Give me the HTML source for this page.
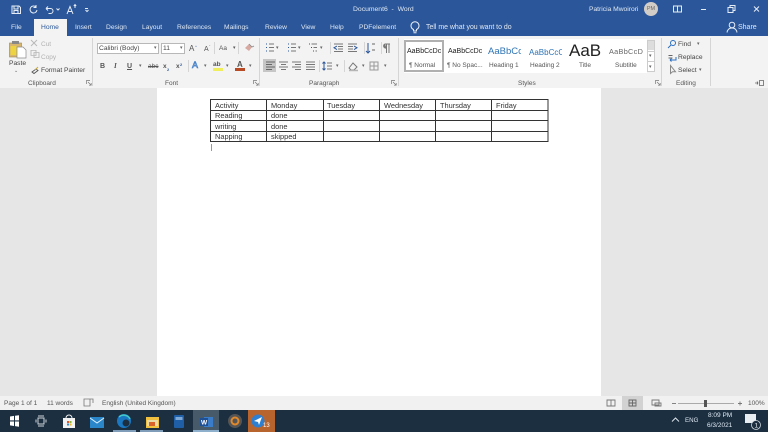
<!DOCTYPE html>
<html><head><meta charset="utf-8"><style>
html,body{margin:0;padding:0;width:768px;height:432px;overflow:hidden;background:#e6e6e6;font-family:"Liberation Sans",sans-serif}
body{filter:blur(.3px)}
div,span{position:absolute;white-space:nowrap}
.w{color:#dfe7f3;font-size:6.7px;line-height:9px}
.t{color:#444;font-size:6.7px;line-height:9px}
.g{color:#555;font-size:6.5px;line-height:9px}
.a{color:#666;font-size:5px;line-height:9px}
.sep{width:1px;background:#d5d5d5}
.btn{color:#555;font-size:7px;font-weight:bold;line-height:9px}
.cell{font-size:7.4px;line-height:10px;color:#333}
svg{position:absolute}
</style></head><body>
<div style="left:0;top:0;width:768px;height:36px;background:#2b579a"></div>
<div style="left:0;top:36px;width:768px;height:52px;background:#f3f3f3"></div>
<div style="left:0;top:88px;width:768px;height:308px;background:#e6e6e6"></div>
<div style="left:157px;top:88px;width:444px;height:308px;background:#fff"></div>
<div style="left:0;top:396px;width:768px;height:14px;background:#f1f1f1"></div>
<div style="left:0;top:410px;width:768px;height:22px;background:#1b2f40"></div>

<!-- QAT -->
<svg style="left:0;top:0" width="100" height="18" fill="none" stroke="#e6ecf5" stroke-width="1">
<path d="M12 6h7l1.500 1.500v6h-8.500z M14 6v3h4v-3 M14 13.500v-3h4v3"/>
<path d="M36 7a3.500 3.500 0 1 0 1 3 M36 5v2.500h-2.500"/>
<path d="M46 8.500h4.500a2.500 2.500 0 0 1 0 5h-2 M46 8.500l2-2 M46 8.500l2 2"/>
<path d="M56.500 8.500l1.500 1.500 1.500-1.500"/>
<path d="M67 14l3-7.500 3 7.500 M68.200 11.500h3.600 M75 8V5 M73.800 6l1.200-1.500 1.200 1.500"/>
<path d="M85 8.500h3 M85.500 10l1.500 1.500 1.500-1.500"/>
</svg>
<div class="w" style="left:353px;top:5px;font-size:6.800px">Document6 &nbsp;- &nbsp;Word</div>
<div class="w" style="left:589px;top:5px">Patricia Mwoirori</div>
<div style="left:644px;top:2px;width:14px;height:14px;border-radius:7px;background:#d3cdc8;color:#666;font-size:5.500px;line-height:14px;text-align:center">PM</div>
<svg style="left:670px;top:0" width="98" height="18" fill="none" stroke="#e6ecf5" stroke-width="1">
<path d="M3.500 6h8v6h-8z M7.500 6v6"/>
<path d="M31 9.500h5"/>
<path d="M58 7.500h5v5h-5z M60 7.500v-2h5v5h-2"/>
<path d="M84 6.500l5 5 M89 6.500l-5 5"/>
</svg>

<!-- tabs -->
<div class="w" style="left:11px;top:23px">File</div>
<div style="left:34px;top:19px;width:33px;height:17px;background:#f3f3f3"></div>
<div style="left:41px;top:23px;font-size:6.700px;line-height:9px;color:#2b579a">Home</div>
<div class="w" style="left:75px;top:23px">Insert</div>
<div class="w" style="left:106px;top:23px">Design</div>
<div class="w" style="left:142px;top:23px">Layout</div>
<div class="w" style="left:177px;top:23px">References</div>
<div class="w" style="left:224px;top:23px">Mailings</div>
<div class="w" style="left:265px;top:23px">Review</div>
<div class="w" style="left:301px;top:23px">View</div>
<div class="w" style="left:330px;top:23px">Help</div>
<div class="w" style="left:359px;top:23px">PDFelement</div>
<svg style="left:408px;top:20px" width="14" height="15" fill="none" stroke="#e6ecf5" stroke-width="1"><path d="M5.500 11v-1.500a4 4 0 1 1 3 0V11z M5.500 12.800h3"/></svg>
<div class="w" style="left:426px;top:23px;font-size:6.950px">Tell me what you want to do</div>
<svg style="left:725px;top:20px" width="14" height="15" fill="none" stroke="#e6ecf5" stroke-width="1"><circle cx="7" cy="5" r="2.800"/><path d="M2 12.500c.5-3 2.500-4.500 5-4.500s4.500 1.500 5 4.500"/></svg>
<div class="w" style="left:738px;top:23px;font-size:7px">Share</div>

<!-- clipboard -->
<svg style="left:8px;top:40px" width="20" height="20"><rect x="1.500" y="3" width="12" height="14" fill="#d9b66d" stroke="#9c8350" stroke-width=".6"/><rect x="4" y="1" width="7" height="3" fill="#888"/><rect x="2.500" y="6" width="6" height="9" fill="#ecd33f"/><path d="M9 7h6l3 3v8h-9z" fill="#fff" stroke="#8a8a8a" stroke-width=".7"/></svg>
<div class="t" style="left:9px;top:59px">Paste</div>
<div class="a" style="left:14px;top:67px">⌄</div>
<svg style="left:29px;top:39px" width="12" height="38" fill="none" stroke="#b8b8b8" stroke-width=".9">
<path d="M2 1l6 6 M8 1l-6 6 M2 8.500h.1 M8 8.500h.1"/>
<path d="M2 14h5v6h-5z M5 16.500h5v6h-5z" transform="translate(0 -.5) scale(1 .85)"/>
<path d="M3 33l4-3 2 1.500-4 3z" stroke="#555"/><path d="M6 31l3-3" stroke="#c9a62c"/>
</svg>
<div style="left:41px;top:40px;font-size:6.500px;line-height:9px;color:#b2b2b2">Cut</div>
<div style="left:41px;top:53px;font-size:6.500px;line-height:9px;color:#b2b2b2">Copy</div>
<div class="t" style="left:41px;top:66px">Format Painter</div>
<div class="g" style="left:28px;top:79px">Clipboard</div>
<div class="sep" style="left:92px;top:38px;height:48px"></div>

<!-- font -->
<div style="left:97px;top:43px;width:62px;height:11px;background:#fff;border:1px solid #b8b8b8;box-sizing:border-box"></div>
<div class="t" style="left:99px;top:44px">Calibri (Body)</div>
<div class="a" style="left:154px;top:44px">▾</div>
<div style="left:161px;top:43px;width:24px;height:11px;background:#fff;border:1px solid #b8b8b8;box-sizing:border-box"></div>
<div class="t" style="left:163px;top:44px">11</div>
<div class="a" style="left:180px;top:44px">▾</div>
<div class="btn" style="left:189px;top:44px;font-size:8px;font-weight:normal">A<span style="left:6px;top:-2px;font-size:4px;color:#2b579a">^</span></div>
<div class="btn" style="left:204px;top:45px;font-size:7px;font-weight:normal">A<span style="left:5px;top:-3px;font-size:4px;color:#2b579a">ˇ</span></div>
<div class="sep" style="left:214px;top:42px;height:12px"></div>
<div class="g" style="left:219px;top:44px">Aa <span style="left:14px;top:0;font-size:5px">▾</span></div>
<div class="sep" style="left:238px;top:42px;height:12px"></div>
<svg style="left:243px;top:42px" width="12" height="12"><path d="M2 6l4-4 3 3-3 4z" fill="#d8a9a0"/><path d="M6 2l3 3 2-1" stroke="#888" fill="none" stroke-width=".8"/></svg>
<div class="btn" style="left:100px;top:62px">B</div>
<div class="btn" style="left:114px;top:62px;font-style:italic;font-family:'Liberation Serif',serif">I</div>
<div class="btn" style="left:127px;top:62px;text-decoration:underline">U</div>
<div class="a" style="left:139px;top:62px">▾</div>
<div class="g" style="left:148px;top:62px;text-decoration:line-through">abc</div>
<div class="g" style="left:163px;top:62px;font-weight:bold">x<span style="left:4px;top:3px;font-size:4px;color:#2b579a">2</span></div>
<div class="g" style="left:176px;top:62px;font-weight:bold">x<span style="left:4px;top:-2px;font-size:4px;color:#2b579a">2</span></div>
<div class="sep" style="left:188px;top:60px;height:12px"></div>
<div style="left:192px;top:60px;font-size:9px;line-height:11px;color:#fff;-webkit-text-stroke:.6px #2b6fc0">A</div>
<div class="a" style="left:204px;top:62px">▾</div>
<div class="g" style="left:213px;top:60px;font-weight:bold">ab</div>
<div style="left:213px;top:68px;width:10px;height:3px;background:#f0ee5a"></div>
<div class="a" style="left:226px;top:62px">▾</div>
<div class="btn" style="left:237px;top:60px;font-size:8px;line-height:9px">A</div>
<div style="left:235px;top:68px;width:10px;height:2.500px;background:#b84a26"></div>
<div class="a" style="left:249px;top:62px">▾</div>
<div class="g" style="left:165px;top:79px">Font</div>
<div class="sep" style="left:259px;top:38px;height:48px"></div>

<!-- paragraph -->
<svg style="left:264px;top:41px" width="134" height="14" fill="none" stroke="#777" stroke-width="1">
<path d="M2 3h1 M2 6.500h1 M2 10h1" stroke="#2b579a"/><path d="M5 3h5 M5 6.500h5 M5 10h5"/>
<path d="M24 3h1 M24 6.500h1 M24 10h1" stroke="#2b579a"/><path d="M27 3h5 M27 6.500h5 M27 10h5"/>
<path d="M45 3h1 M47 6.500h1 M49 10h1" stroke="#2b579a"/><path d="M47.500 3h5.500 M49.500 6.500h3.500 M51.500 10h1.500"/>
<path d="M70 3h9 M74 5.500h5 M74 8h5 M70 10.500h9"/><path d="M73 5l-3 1.800 3 1.800" stroke="#2b579a"/>
<path d="M84 3h9 M84 5.500h5 M84 8h5 M84 10.500h9"/><path d="M90 5l3 1.800-3 1.800" stroke="#2b579a"/>
<path d="M104 2v10 M102 10l2 2 2-2" stroke="#2b579a"/><path d="M108 3h3 M108 9h3" stroke="#666"/>
<path d="M121 3h5 M122.500 3v9 M125 3v9"/><path d="M121 3a2 2 0 0 0 1.500 4" fill="#777"/>
</svg>
<div class="a" style="left:276px;top:44px">▾</div>
<div class="a" style="left:298px;top:44px">▾</div>
<div class="a" style="left:320px;top:44px">▾</div>
<div class="sep" style="left:330px;top:42px;height:12px"></div>
<div class="sep" style="left:364px;top:42px;height:12px"></div>
<div class="sep" style="left:381px;top:42px;height:12px"></div>
<div style="left:263px;top:59px;width:13px;height:13px;background:#c6c6c6"></div>
<svg style="left:264px;top:60px" width="130" height="12" fill="none" stroke="#777" stroke-width="1">
<path d="M2 2h9 M2 4.500h6 M2 7h9 M2 9.500h6" stroke="#666"/>
<path d="M15 2h9 M17 4.500h5 M15 7h9 M17 9.500h5"/>
<path d="M28 2h9 M31 4.500h6 M28 7h9 M31 9.500h6"/>
<path d="M42 2h9 M42 4.500h9 M42 7h9 M42 9.500h9"/>
<path d="M60 2v8 M58.500 3.500l1.500-1.500 1.500 1.500 M58.500 8.500l1.500 1.500 1.500-1.500" stroke="#2b579a"/>
<path d="M63 3h5 M63 6h5 M63 9h5"/>
<path d="M85 8l4-5 4 4-3 3h-3z"/><path d="M85 10.500h9" stroke="#b5b5b5" stroke-width="1.500"/>
<path d="M106 2h8v8h-8z M110 2v8 M106 6h8" stroke="#999"/>
</svg>
<div class="a" style="left:336px;top:62px">▾</div>
<div class="a" style="left:362px;top:62px">▾</div>
<div class="a" style="left:384px;top:62px">▾</div>
<div class="sep" style="left:319px;top:60px;height:12px"></div>
<div class="sep" style="left:344px;top:60px;height:12px"></div>
<div class="g" style="left:309px;top:79px">Paragraph</div>
<div class="sep" style="left:398px;top:38px;height:48px"></div>

<!-- styles -->
<div style="left:404px;top:39px;width:243px;height:34px;background:#fff"></div>
<div style="left:404px;top:40px;width:40px;height:32px;box-sizing:border-box;border:2px solid #b0b0b0;background:#fff"></div>
<div style="left:407px;top:47px;width:34px;overflow:hidden;font-size:7px;line-height:10px;color:#222">AaBbCcDc</div>
<div class="g" style="left:409px;top:61px">¶ Normal</div>
<div style="left:448px;top:47px;width:34px;overflow:hidden;font-size:7px;line-height:10px;color:#222">AaBbCcDc</div>
<div class="g" style="left:447px;top:61px">¶ No Spac...</div>
<div style="left:488px;top:46px;width:33px;overflow:hidden;font-size:9.500px;line-height:12px;color:#2e74b5">AaBbCc</div>
<div class="g" style="left:489px;top:61px">Heading 1</div>
<div style="left:529px;top:47px;width:33px;overflow:hidden;font-size:8px;line-height:11px;color:#2e74b5">AaBbCcC</div>
<div class="g" style="left:530px;top:61px">Heading 2</div>
<div style="left:569px;top:41px;width:34px;overflow:hidden;font-size:17px;line-height:20px;color:#222">AaB</div>
<div class="g" style="left:579px;top:61px">Title</div>
<div style="left:609px;top:47px;width:35px;overflow:hidden;font-size:7.300px;line-height:10px;color:#666;letter-spacing:.3px">AaBbCcD</div>
<div class="g" style="left:615px;top:61px">Subtitle</div>
<div style="left:647px;top:40px;width:8px;height:32px;background:#fff;border:1px solid #ccc;box-sizing:border-box"></div>
<div style="left:648px;top:41px;width:6px;height:9px;background:#ddd"></div>
<div style="left:647px;top:51px;width:8px;height:1px;background:#ccc"></div>
<div style="left:647px;top:61px;width:8px;height:1px;background:#ccc"></div>
<div class="a" style="left:649px;top:52px">▾</div>
<div class="a" style="left:649px;top:63px">▾</div>
<div class="g" style="left:518px;top:79px">Styles</div>
<div class="sep" style="left:661px;top:38px;height:48px"></div>

<!-- editing -->
<svg style="left:667px;top:39px" width="11" height="38" fill="none" stroke="#2b6fc0" stroke-width="1">
<circle cx="6" cy="4" r="2.500"/><path d="M4 6l-3 3"/>
<path d="M1.500 16.500h4 M1.500 19h4" stroke="#666"/><path d="M3 21h6v-3M3 21l1.500-1.500M3 21l1.500 1.500" stroke="#2b6fc0"/>
<path d="M3.500 26.500l0 8 2-1.800 3 0z" stroke="#888"/>
</svg>
<div class="t" style="left:678px;top:40px">Find</div>
<div class="a" style="left:697px;top:40px">▾</div>
<div class="t" style="left:678px;top:53px">Replace</div>
<div class="t" style="left:678px;top:66px">Select</div>
<div class="a" style="left:699px;top:66px">▾</div>
<div class="g" style="left:676px;top:79px">Editing</div>
<div class="sep" style="left:710px;top:38px;height:48px"></div>
<svg style="left:755px;top:80px" width="12" height="8" fill="none" stroke="#666" stroke-width=".8"><path d="M0 3h2.500 M3 3l-1 1.500 M3 3l-1-1.500 M4.500 .5h4v5h-4z"/></svg>
<svg style="left:86px;top:80px" width="6" height="6" fill="none" stroke="#777" stroke-width=".7"><path d="M.5 4V.5h3.500 M2 2l3 3 M5.200 3v2.200h-2.200"/></svg>
<svg style="left:253px;top:80px" width="6" height="6" fill="none" stroke="#777" stroke-width=".7"><path d="M.5 4V.5h3.500 M2 2l3 3 M5.200 3v2.200h-2.200"/></svg>
<svg style="left:391px;top:80px" width="6" height="6" fill="none" stroke="#777" stroke-width=".7"><path d="M.5 4V.5h3.500 M2 2l3 3 M5.200 3v2.200h-2.200"/></svg>
<svg style="left:655px;top:80px" width="6" height="6" fill="none" stroke="#777" stroke-width=".7"><path d="M.5 4V.5h3.500 M2 2l3 3 M5.200 3v2.200h-2.200"/></svg>

<!-- table -->
<svg style="left:210px;top:99px" width="340" height="44" fill="none" stroke="#333" stroke-width="1">
<path d="M.5 .5H338V42.500H.5z M.5 11.500H338 M.5 21.500H338 M.5 32.500H338 M56.500 .5V42.500 M113.500 .5V42.500 M169.500 .5V42.500 M225.500 .5V42.500 M281.500 .5V42.500"/>
</svg>
<div class="cell" style="left:215px;top:100.500px">Activity</div>
<div class="cell" style="left:271px;top:100.500px">Monday</div>
<div class="cell" style="left:327px;top:100.500px">Tuesday</div>
<div class="cell" style="left:384px;top:100.500px">Wednesday</div>
<div class="cell" style="left:440px;top:100.500px">Thursday</div>
<div class="cell" style="left:496px;top:100.500px">Friday</div>
<div class="cell" style="left:215px;top:111px">Reading</div>
<div class="cell" style="left:271px;top:111px">done</div>
<div class="cell" style="left:215px;top:121.500px">writing</div>
<div class="cell" style="left:271px;top:121.500px">done</div>
<div class="cell" style="left:215px;top:132px">Napping</div>
<div class="cell" style="left:271px;top:132px">skipped</div>
<div style="left:211px;top:144px;width:1px;height:7px;background:#999"></div>

<!-- status -->
<div class="g" style="left:4px;top:399px">Page 1 of 1</div>
<div class="g" style="left:47px;top:399px">11 words</div>
<svg style="left:83px;top:398px" width="12" height="10" fill="none" stroke="#777" stroke-width=".8"><path d="M1 1h6v7h-6z M7 1h3v4"/></svg>
<div class="g" style="left:102px;top:399px">English (United Kingdom)</div>
<div style="left:622px;top:396px;width:21px;height:14px;background:#d2d2d2"></div>
<svg style="left:600px;top:396px" width="168" height="14" fill="none" stroke="#777" stroke-width=".9">
<path d="M7 4h4v6h-4z M11 4h4v6h-4z"/>
<path d="M29 4h7v6h-7z M29 7h7 M32.500 4v6" stroke="#666"/>
<path d="M52 4h7v5h-7z M55 7h6v3h-6z"/>
<path d="M72 7.500h4"/><path d="M78 7.500h56" stroke="#aaa"/><path d="M138 7.500h4 M140 5.500v4"/>
</svg>
<div style="left:704px;top:400px;width:3px;height:7px;background:#555"></div>
<div class="g" style="left:748px;top:399px">100%</div>

<!-- taskbar -->
<div style="left:193px;top:410px;width:26px;height:22px;background:#475a69"></div>
<div style="left:248px;top:410px;width:27px;height:22px;background:#b8642f"></div>
<div style="left:113px;top:430px;width:23px;height:2px;background:#7f9cb8"></div>
<div style="left:140px;top:430px;width:23px;height:2px;background:#7f9cb8"></div>
<div style="left:193px;top:430px;width:26px;height:2px;background:#8fb0cc"></div>
<svg style="left:0;top:410px" width="280" height="22">
<path d="M10 6.500l4-.6v4.500h-4z M15 5.800l4-.6v5.200h-4z M10 11.500h4v4.500l-4-.6z M15 11.500h4v5.200l-4-.6z" fill="#fff"/>
<path d="M38 8h6v6h-6z M36 9.500v3 M46 9.500v3 M38 6h6 M38 16h6" fill="none" stroke="#cfd6dc" stroke-width="1"/>
<path d="M63 8h12v10h-12z" fill="#f2f2f2"/><path d="M66 8a3 3 0 0 1 6 0" fill="none" stroke="#f2f2f2"/><rect x="67" y="11" width="2" height="2" fill="#e2572b"/><rect x="69.500" y="11" width="2" height="2" fill="#7fba3a"/><rect x="67" y="13.500" width="2" height="2" fill="#2c8fd6"/><rect x="69.500" y="13.500" width="2" height="2" fill="#f2b71f"/>
<path d="M90 7h14v11h-14z" fill="#2a86c8"/><path d="M90 8l7 5 7-5" fill="none" stroke="#dff0fb" stroke-width="1"/>
<circle cx="124" cy="11" r="7" fill="#1a78c2"/><circle cx="126" cy="13" r="3.500" fill="#1b2f40"/><path d="M119 7a7 7 0 0 1 11 2" fill="none" stroke="#45c8c8" stroke-width="1.500"/>
<path d="M146 7h13v11h-13z" fill="#f0c040"/><rect x="147" y="10" width="11" height="6" fill="#e8d9a8"/><rect x="149" y="12" width="6" height="4" fill="#d9622b"/>
<rect x="174" y="5" width="10" height="13" rx="1" fill="#1f5fa8"/><rect x="175.500" y="7" width="7" height="3" fill="#7fa9d6"/>
<rect x="204" y="7" width="9" height="10" fill="#3a7cc8"/><rect x="200" y="8" width="8" height="8" fill="#1f4f94"/><text x="201" y="14.500" font-size="6.500" font-weight="bold" fill="#fff" font-family="Liberation Sans">W</text>
<circle cx="235" cy="11" r="7" fill="#555"/><circle cx="235" cy="11" r="3.500" fill="none" stroke="#e0892c" stroke-width="2"/>
<circle cx="258" cy="11" r="6.500" fill="#2f7fd0"/><path d="M254 11l8-4-3 8-1-3z" fill="#fff"/><text x="263" y="17" font-size="6" fill="#fff" font-family="Liberation Sans">13</text>
</svg>
<svg style="left:671px;top:416px" width="10" height="8" fill="none" stroke="#dce3ea" stroke-width="1"><path d="M1 5.500l3.500-3.500 3.500 3.500"/></svg>
<div class="w" style="left:685px;top:416px;font-size:6.200px">ENG</div>
<div class="w" style="left:708px;top:410.500px;font-size:6.500px">8:09 PM</div>
<div class="w" style="left:707px;top:421px;font-size:6.500px">6/3/2021</div>
<svg style="left:743px;top:412px" width="20" height="20"><path d="M2 2h11v9h-11z" fill="#e8edf2"/><circle cx="13" cy="13" r="4.500" fill="#1b2f40" stroke="#cfd6dc" stroke-width=".8"/><text x="11.500" y="15.500" font-size="6.500" fill="#e8edf2" font-family="Liberation Sans">1</text></svg>
</body></html>
